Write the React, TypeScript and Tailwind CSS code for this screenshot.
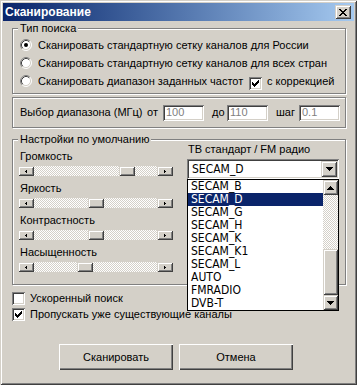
import React from "react";

const raised =
  "shadow-[inset_1px_1px_#d4d0c8,inset_-1px_-1px_#404040,inset_2px_2px_#ffffff,inset_-2px_-2px_#808080]";
const pushBtn =
  "shadow-[inset_1px_1px_#ffffff,inset_-1px_-1px_#404040,inset_-2px_-2px_#808080]";
const sunken =
  "shadow-[inset_1px_1px_#808080,inset_-1px_-1px_#ffffff,inset_2px_2px_#404040,inset_-2px_-2px_#d4d0c8]";
const etched = "border border-[#808080] shadow-[1px_1px_0_#ffffff,inset_1px_1px_0_#ffffff]";
const hatch =
  "bg-[image:repeating-conic-gradient(#ffffff_0_25%,#d4d0c8_0_50%)] bg-[length:2px_2px]";

type Rect = [number, number, number, number];

const Pix = ({ w, h, rects, color = "#000" }: { w: number; h: number; rects: Rect[]; color?: string }) => (
  <svg width={w} height={h} viewBox={`0 0 ${w} ${h}`} shapeRendering="crispEdges">
    {rects.map(([x, y, rw, rh], i) => (
      <rect key={i} x={x} y={y} width={rw} height={rh} fill={color} />
    ))}
  </svg>
);

const tinyLeft: Rect[] = [[0, 1, 1, 1], [1, 0, 1, 3]];
const tinyRight: Rect[] = [[0, 0, 1, 3], [1, 1, 1, 1]];
const down: Rect[] = [[0, 0, 7, 1], [1, 1, 5, 1], [2, 2, 3, 1], [3, 3, 1, 1]];
const up: Rect[] = [[3, 0, 1, 1], [2, 1, 3, 1], [1, 2, 5, 1], [0, 3, 7, 1]];
const check: Rect[] = [
  [0, 2, 1, 3], [1, 3, 1, 3], [2, 4, 1, 3], [3, 3, 1, 3], [4, 2, 1, 3], [5, 1, 1, 3], [6, 0, 1, 3],
];
const closeX: Rect[] = Array.from({ length: 7 }).flatMap((_, r) => [
  [r, r, 2, 1] as Rect,
  [6 - r, r, 2, 1] as Rect,
]);

const Radio = ({ on }: { on?: boolean }) => (
  <svg width="12" height="12" viewBox="0 0 12 12" className="shrink-0">
    <circle cx="6" cy="6" r="5" fill="#fff" />
    <path d="M2.11 9.89 A5.5 5.5 0 0 1 9.89 2.11" stroke="#808080" fill="none" />
    <path d="M9.89 2.11 A5.5 5.5 0 0 1 2.11 9.89" stroke="#fff" fill="none" />
    <path d="M2.82 9.18 A4.5 4.5 0 0 1 9.18 2.82" stroke="#404040" fill="none" />
    <path d="M9.18 2.82 A4.5 4.5 0 0 1 2.82 9.18" stroke="#d4d0c8" fill="none" />
    {on && <circle cx="6" cy="6" r="2" fill="#000" />}
  </svg>
);

const Check = ({ on, className = "" }: { on?: boolean; className?: string }) => (
  <div className={`h-[13px] w-[13px] shrink-0 bg-white pl-[3px] pt-[3px] ${sunken} ${className}`}>
    {on && <Pix w={7} h={7} rects={check} />}
  </div>
);

const Field = ({ value }: { value: string }) => (
  <div className={`flex h-[16px] w-[41px] items-center bg-white pl-[3px] text-[#808080] ${sunken}`}>
    {value}
  </div>
);

const Slider = ({ pos }: { pos: number }) => (
  <div className="flex h-[10px] w-[155px]">
    <div className={`flex h-full w-[16px] items-center justify-center bg-[#d4d0c8] ${raised}`}>
      <Pix w={2} h={3} rects={tinyLeft} />
    </div>
    <div className={`flex flex-1 ${hatch}`}>
      <div style={{ width: pos }} />
      <div className={`h-full w-[16px] bg-[#d4d0c8] ${raised}`} />
    </div>
    <div className={`flex h-full w-[16px] items-center justify-center bg-[#d4d0c8] ${raised}`}>
      <Pix w={2} h={3} rects={tinyRight} />
    </div>
  </div>
);

const sliders = [
  { label: "Громкость", pos: 85 },
  { label: "Яркость", pos: 54 },
  { label: "Контрастность", pos: 54 },
  { label: "Насыщенность", pos: 43 },
];

const standards = [
  "SECAM_B", "SECAM_D", "SECAM_G", "SECAM_H", "SECAM_K",
  "SECAM_K1", "SECAM_L", "AUTO", "FMRADIO", "DVB-T",
];

const narrow = "font-['Liberation_Sans_Narrow','DejaVu_Sans_Condensed',sans-serif] text-[12px] leading-[13px]";

export default function App() {
  return (
    <div
      className={`relative h-[385px] w-[357px] overflow-hidden bg-[#d4d0c8] p-[3px] font-['Liberation_Sans',Arial,sans-serif] text-[11px] leading-[13px] text-black ${raised}`}
    >
      {/* title bar */}
      <div className="flex h-[18px] items-center bg-linear-to-r from-[#0a246a] to-[#a6caf0] pl-[2px]">
        <span className="text-[12px] font-bold text-white">Сканирование</span>
        <div className={`ml-auto mr-[3px] flex h-[14px] w-[16px] items-center justify-center bg-[#d4d0c8] ${raised}`}>
          <Pix w={8} h={7} rects={closeX} />
        </div>
      </div>

      <div className="pl-[9px]">
        {/* search type */}
        <div className={`relative mt-[7px] h-[66px] w-[334px] pl-[7px] pt-[7px] ${etched}`}>
          <span className="absolute left-[5px] top-[-7px] bg-[#d4d0c8] px-[2px]">Тип поиска</span>
          <div className="flex h-[18px] items-center">
            <Radio on />
            <span className="ml-[6px]">Сканировать стандартную сетку каналов для России</span>
          </div>
          <div className="flex h-[18px] items-center">
            <Radio />
            <span className="ml-[6px]">Сканировать стандартную сетку каналов для всех стран</span>
          </div>
          <div className="flex h-[18px] items-center">
            <Radio />
            <span className="ml-[6px] w-[211px]">Сканировать диапазон заданных частот</span>
            <Check on className="mt-[4px]" />
            <span className="ml-[5px]">с коррекцией</span>
          </div>
        </div>

        {/* range */}
        <div className={`mt-[3px] flex h-[31px] w-[334px] items-center pl-[7px] ${etched}`}>
          <span className="w-[127px]">Выбор диапазона (МГц)</span>
          <span className="w-[16px]">от</span>
          <Field value="100" />
          <span className="ml-[8px] w-[15px]">до</span>
          <Field value="110" />
          <span className="ml-[8px] w-[23px]">шаг</span>
          <Field value="0.1" />
        </div>

        {/* defaults */}
        <div className={`relative mt-[11px] flex h-[146px] w-[334px] ${etched}`}>
          <span className="absolute left-[5px] top-[-7px] bg-[#d4d0c8] px-[2px]">Настройки по умолчанию</span>
          <div className="ml-[5px] flex flex-col pt-[10px]">
            {sliders.map((s) => (
              <div key={s.label} className="mb-[6px] flex flex-col">
                <span className="ml-[2px]">{s.label}</span>
                <div className="mt-[3px]">
                  <Slider pos={s.pos} />
                </div>
              </div>
            ))}
          </div>
          <div className="ml-[14px] flex flex-col pt-[3px]">
            <span className="ml-[1px]">ТВ стандарт / FM радио</span>
            <div className="relative mt-[3px] w-[152px]">
              <div className={`flex h-[20px] items-center bg-white p-[2px] ${sunken}`}>
                <span className={`pl-[3px] ${narrow}`}>SECAM_D</span>
                <div className={`ml-auto flex h-[16px] w-[16px] items-center justify-center bg-[#d4d0c8] ${raised}`}>
                  <Pix w={7} h={4} rects={down} />
                </div>
              </div>
              {/* open dropdown list */}
              <div className="absolute left-0 top-[20px] z-10 flex h-[132px] w-[152px] border border-black bg-white">
                <div className="flex flex-1 flex-col">
                  {standards.map((s) => (
                    <div
                      key={s}
                      className={`h-[13px] pl-[3px] ${narrow} ${s === "SECAM_D" ? "bg-[#0a246a] text-white" : ""}`}
                    >
                      {s}
                    </div>
                  ))}
                </div>
                <div className="flex w-[15px] flex-col">
                  <div className={`flex h-[15px] items-center justify-center bg-[#d4d0c8] ${raised}`}>
                    <Pix w={7} h={4} rects={up} />
                  </div>
                  <div className={`h-[54px] ${hatch}`} />
                  <div className={`h-[46px] bg-[#d4d0c8] ${raised}`} />
                  <div className={`flex h-[15px] items-center justify-center bg-[#d4d0c8] ${raised}`}>
                    <Pix w={7} h={4} rects={down} />
                  </div>
                </div>
              </div>
            </div>
          </div>
        </div>

        {/* options */}
        <div className="mt-[5px] flex h-[16px] items-center">
          <Check />
          <span className="ml-[5px]">Ускоренный поиск</span>
        </div>
        <div className="flex h-[16px] items-center">
          <Check on />
          <span className="ml-[5px]">Пропускать уже существующие каналы</span>
        </div>

        {/* buttons */}
        <div className="ml-[47px] mt-[22px] flex gap-[6px]">
          <div className={`flex h-[26px] w-[114px] items-center justify-center bg-[#d4d0c8] ${pushBtn}`}>
            Сканировать
          </div>
          <div className={`flex h-[26px] w-[114px] items-center justify-center bg-[#d4d0c8] ${pushBtn}`}>
            Отмена
          </div>
        </div>
      </div>
    </div>
  );
}
